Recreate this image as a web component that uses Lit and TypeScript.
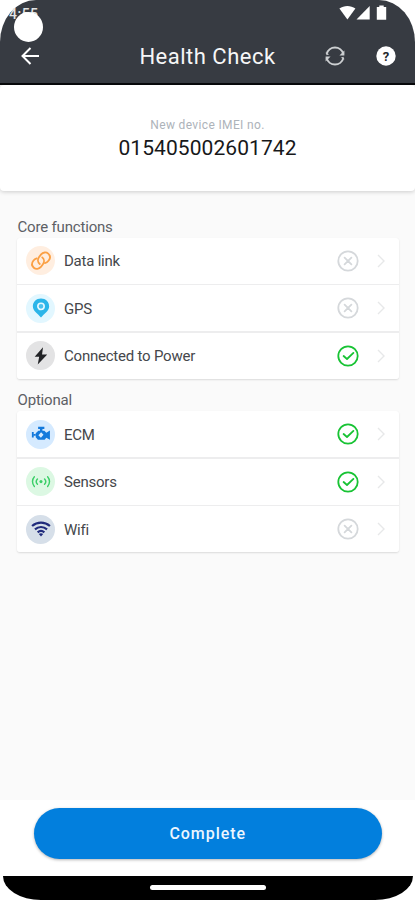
import { LitElement, html, css, svg } from "lit";
import { customElement } from "lit/decorators.js";

const icons = {
  link: svg`<g fill="none" stroke="#fba044" stroke-width="1.9" stroke-linecap="round">
    <path d="M11.2 15.6C8.9 13.7 8.9 10.6 10.5 8.4L12.6 5.6C14.6 3.2 18 3 20 4.8C22.3 6.9 22.3 9.7 20.5 12C19.3 13.6 18 14.4 16.6 14.7"/>
    <path d="M13.8 8.7C16.1 10.6 16.1 13.7 14.5 15.9L12.4 18.7C10.4 21.1 7 21.3 5 19.5C2.7 17.4 2.7 14.6 4.5 12.3C5.4 11.1 6.5 10.3 8 9.8"/></g>`,
  pin: svg`<path fill="#2bb5e9" d="M12.5 2.5C7.5 2.5 4 6 4 10.7C4 15.6 9.3 18.5 12.5 22.5C15.7 18.5 21 15.6 21 10.7C21 6 17.5 2.5 12.5 2.5Z"/>
    <circle cx="12.5" cy="10.8" r="3.3" fill="#4dc0ed" stroke="#e6f8ff" stroke-width="1.7"/>`,
  bolt: svg`<path fill="#222326" d="M14.6 3.5L5.9 13.4H10.6L9.1 21.4L19 10.9H13.6Z"/>`,
  engine: svg`<path fill="#1379dc" fill-rule="evenodd" d="M9.5 5H16V7.2H14V9H16L18 11.1L21.8 8.8V18.6L18 16.4L16.3 18.6H9.3L7 15.8V11.6L9.7 9H11.4V7.2H9.5ZM12.6 10.8L9.8 13.7L12.4 16.4L15.1 13.4Z"/>
    <path fill="#1379dc" d="M3 10.4H4.9V16.2H3ZM5 12.4H7V14.2H5Z"/>`,
  sensor: svg`<g fill="none" stroke="#3bcf68" stroke-width="1.5" stroke-linecap="round"><path d="M5.6 7C3 9.8 3 14.4 5.6 17.2M8.8 9.4C7.2 11.1 7.2 13.2 8.8 14.9M16.2 9.4C17.8 11.1 17.8 13.2 16.2 14.9M19.4 7C22 9.8 22 14.4 19.4 17.2"/></g>
    <circle cx="12.5" cy="12.1" r="1.6" fill="#3bcf68"/>`,
  wifi: svg`<g fill="none" stroke="#202b7c" stroke-width="2.3"><path d="M3.2 9.4C8.6 4.6 16.4 4.6 21.8 9.4M6.2 12.9C10 9.7 15 9.7 18.8 12.9M9 16C11 14.3 14 14.3 16 16"/></g>
    <path fill="#202b7c" d="M10.2 17.7C11.6 16.7 13.4 16.7 14.8 17.7L12.5 20.2Z"/>`,
};

type Row = { icon: keyof typeof icons; label: string; ok: boolean };

const core: Row[] = [
  { icon: "link", label: "Data link", ok: false },
  { icon: "pin", label: "GPS", ok: false },
  { icon: "bolt", label: "Connected to Power", ok: true },
];
const optional: Row[] = [
  { icon: "engine", label: "ECM", ok: true },
  { icon: "sensor", label: "Sensors", ok: true },
  { icon: "wifi", label: "Wifi", ok: false },
];

@customElement("app-root")
export class AppRoot extends LitElement {
  static styles = css`
    :host { display: block; height: 900px; background: #fff; font-family: Roboto, sans-serif; }
    * { box-sizing: border-box; }
    svg { display: block; flex: none; }
    .screen { position: relative; display: flex; flex-direction: column; height: 900px; overflow: hidden; background: #fafafa; }
    .top { height: 85px; background: #373b42; border-bottom: 2px solid #08090b; border-radius: 36px 36px 0 0 / 42px 42px 0 0; color: #fff; }
    .corners { background: #fff; flex: none; }
    .status { display: flex; justify-content: space-between; height: 28px; padding: 5px 28px 0 9px; }
    .time { font-size: 14px; line-height: 18px; font-weight: 500; color: #e2e3e4; letter-spacing: 0.5px; }
    .camera { position: absolute; left: 14px; top: 12px; width: 29px; height: 30px; border-radius: 50%; background: #fff; }
    .bar { display: grid; grid-template-columns: 130px 1fr 130px; align-items: center; height: 56px; }
    .back { margin-left: 20px; }
    .title { padding-top: 1px; text-align: center; font-size: 22px; line-height: 28px; letter-spacing: 0.5px; white-space: nowrap; color: #f6f6f7; }
    .actions { display: flex; gap: 30px; justify-content: flex-end; padding-right: 19px; }
    .help { font: 700 13px Roboto, sans-serif; fill: #24272c; text-anchor: middle; }
    .imei { flex: none; height: 105.5px; padding-top: 32px; background: #fff; border-radius: 4px; text-align: center; box-shadow: 0 1px 4px rgba(0,0,0,.18); }
    .caption { font-size: 12px; line-height: 16px; letter-spacing: 0.35px; color: #adb3ba; }
    .number { font-size: 21px; line-height: 28px; color: #17181a; letter-spacing: 0.07px; margin-top: 1px; }
    .main { flex: 1; padding: 26px 16px 0 17px; }
    .heading { height: 21px; font-size: 15px; line-height: 20px; color: #5d6065; letter-spacing: -0.18px; padding-left: 0.5px; }
    .frame { border-radius: 3px; box-shadow: 0 1px 2px rgba(0,0,0,.13); height: 141px; margin-bottom: 11.5px; }
    .list { display: flex; flex-direction: column; gap: 1.5px; height: 141px; border-radius: 3px; background: #ededee; overflow: hidden; }
    .row { flex: 1; display: flex; align-items: center; padding: 0 12px 0 9px; background: #fff; }
    .badge { display: flex; align-items: center; justify-content: center; width: 29px; height: 29px; border-radius: 50%; }
    .link { background: #ffeee0; } .pin { background: #e2f7ff; } .bolt { background: #e3e3e4; }
    .engine { background: #d5eaff; } .sensor { background: #dcf8e3; } .wifi { background: #d6dfe9; }
    .label { flex: 1; padding: 1px 0 0 9px; font-size: 15px; line-height: 20px; letter-spacing: -0.22px; color: #45474b; }
    .chev { margin-left: 16px; }
    .footer { flex: none; height: 76px; padding: 8px 33.5px 0 34px; background: #fff; }
    .button { display: block; width: 100%; height: 50.5px; padding: 0; border: 0; border-radius: 26px; background: #027fdd; color: #ecf6ff; font: 500 16px Roboto, sans-serif; letter-spacing: 0.95px; box-shadow: 0 1px 3px rgba(0,0,0,.3); }
    .navbg { flex: none; background: #fff; }
    .nav { display: flex; justify-content: center; height: 24px; padding-top: 9px; margin: 0 2px 0 3px; background: #000; border-radius: 0 0 38px 38px / 0 0 24px 24px; }
    .pill { width: 116px; height: 5px; border-radius: 3px; background: #fff; }
  `;

  private list(title: string, rows: Row[]) {
    return html`<div class="heading">${title}</div>
      <div class="frame"><div class="list">
        ${rows.map((r) => html`<div class="row">
          <div class="badge ${r.icon}"><svg width="24" height="24" viewBox="0 0 25 25">${icons[r.icon]}</svg></div>
          <div class="label">${r.label}</div>
          <svg width="22" height="22" viewBox="0 0 22 22" fill="none" stroke=${r.ok ? "#18c334" : "#d5d8db"} stroke-width="1.8" stroke-linecap="round" stroke-linejoin="round">
            <circle cx="11" cy="11" r="9.7"/>
            <path d=${r.ok ? "M6.6 11L10 14L16.4 7.9" : "M7.6 7.6L14.4 14.4M14.4 7.6L7.6 14.4"}/>
          </svg>
          <svg class="chev" width="12" height="16" viewBox="0 0 12 16" fill="none" stroke="#e7e8e9" stroke-width="1.4"><path d="M3 2L9 8L3 14"/></svg>
        </div>`)}
      </div></div>`;
  }

  render() {
    return html`<div class="screen">
      <div class="corners"><div class="top">
        <div class="status">
          <div class="time">4:55</div>
          <svg width="48" height="17" viewBox="0 0 48 17" fill="#fff">
            <path d="M0.4 3.5C5 0 11.8 0 16.4 3.5L8.4 14.5Z"/><path d="M30.7 1V14.6H17.5Z"/>
            <path d="M40.3 0.5H44.7V2H47.2V14.8H37.8V2H40.3Z"/>
          </svg>
        </div>
        <div class="bar">
          <svg class="back" width="20" height="20" viewBox="0 0 20 20" fill="none" stroke="#fff" stroke-width="2"><path d="M19 10H3M10.5 2L2.5 10L10.5 18"/></svg>
          <div class="title">Health Check</div>
          <div class="actions">
            <svg width="22" height="22" viewBox="0 0 22 22" fill="none" stroke="#cccfd1" stroke-width="1.9">
              <path d="M2.7 8.8A8.6 8.6 0 0 1 19.3 8.8M19.3 13.2A8.6 8.6 0 0 1 2.7 13.2"/>
              <path d="M20.4 5.6V10.6H15.4ZM1.6 16.4V11.4H6.6ZM1.6 7.4L2.6 10.2L5.2 9.2ZM20.4 14.6L19.4 11.8L16.8 12.8Z" fill="#cccfd1" stroke="none"/>
            </svg>
            <svg width="20" height="22" viewBox="0 0 20 22"><circle cx="10" cy="11" r="9.7" fill="#fff"/><text class="help" x="10" y="15.6">?</text></svg>
          </div>
        </div>
      </div></div>
      <div class="camera"></div>
      <div class="imei"><div class="caption">New device IMEI no.</div><div class="number">015405002601742</div></div>
      <div class="main">${this.list("Core functions", core)}${this.list("Optional", optional)}</div>
      <div class="footer"><button class="button">Complete</button></div>
      <div class="navbg"><div class="nav"><div class="pill"></div></div></div>
    </div>`;
  }
}
